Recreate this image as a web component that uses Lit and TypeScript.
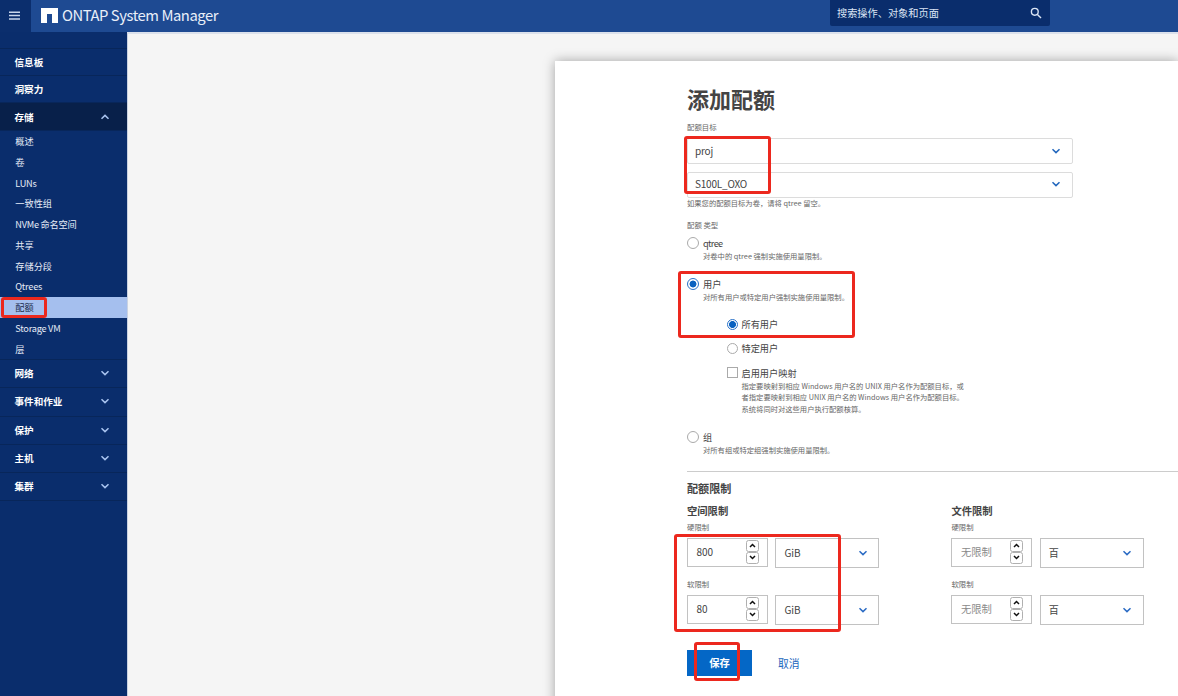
import { LitElement, html, css, svg } from "lit";
import { customElement, property } from "lit/decorators.js";

const FONT = css`"Noto Sans CJK SC", "Noto Sans", sans-serif`;

@customElement("chevron-icon")
class ChevronIcon extends LitElement {
  @property({ type: Boolean }) up = false;
  static styles = css`
    :host { display: block; width: 10px; height: 8px; }
    svg { display: block; }
  `;
  render() {
    const d = this.up ? "M1.5 5.8 L5 2.4 L8.5 5.8" : "M1.5 2.2 L5 5.6 L8.5 2.2";
    return html`<svg width="10" height="8" viewBox="0 0 10 8" fill="none" stroke="currentColor" stroke-width="1.5">${svg`<path d=${d} />`}</svg>`;
  }
}

@customElement("nav-panel")
class NavPanel extends LitElement {
  static styles = css`
    :host { display: block; box-sizing: border-box; width: 127px; height: 664px; background: #0a2d6c; color: #fff; font-family: ${FONT}; }
    .blank { height: 16px; border-bottom: 1px solid #08265a; }
    .row { box-sizing: border-box; display: flex; align-items: center; justify-content: space-between; padding: 0 17px 0 14.5px; height: 27px; border-bottom: 1px solid #08265a; font-size: 9.6px; font-weight: 700; line-height: 14px; }
    .row chevron-icon { color: #a9c4f0; }
    .open { height: 28px; background: #08204a; }
    .tall { height: 28.25px; padding-bottom: 1px; }
    .subs { height: 229px; border-bottom: 1px solid #08265a; box-sizing: border-box; }
    .sub { height: 20.77px; line-height: 20.3px; padding-left: 15.3px; font-size: 9.2px; color: #e6ecf7; white-space: pre; }
    .latin { letter-spacing: -0.25px; }
    .active { background: #a5bfee; color: #1c2c4c; }
  `;
  render() {
    const subs = ["概述", "卷", "LUNs", "一致性组", "NVMe 命名空间", "共享", "存储分段", "Qtrees", "配额", "Storage VM", "层"];
    return html`
      <div class="blank"></div>
      <div class="row">信息板</div>
      <div class="row">洞察力</div>
      <div class="row open">存储<chevron-icon up></chevron-icon></div>
      <div class="subs">${subs.map((s) => html`<div class="sub ${s === "配额" ? "active" : ""} ${/^[A-Z]/.test(s) ? "latin" : ""}">${s}</div>`)}</div>
      ${["网络", "事件和作业", "保护", "主机", "集群"].map((s) => html`<div class="row tall">${s}<chevron-icon></chevron-icon></div>`)}
    `;
  }
}

@customElement("limit-row")
class LimitRow extends LitElement {
  @property() label = "";
  @property() value = "";
  @property() unit = "";
  @property({ type: Boolean }) empty = false;
  static styles = css`
    :host { display: block; height: 57px; font-family: ${FONT}; color: #444; }
    .label { height: 17px; line-height: 12px; font-size: 7.4px; color: #666; }
    .fields { display: flex; gap: 8px; align-items: flex-start; }
    .num { box-sizing: border-box; width: 81px; height: 29px; border: 1px solid #c2c2c2; display: flex; justify-content: space-between; padding: 1px 8px 0 8.5px; font-size: 10px; line-height: 24px; }
    .empty { color: #8a8a8a; font-size: 10.3px; }
    .spin { display: flex; flex-direction: column; }
    .spin span { box-sizing: border-box; width: 13px; height: 12px; border: 1px solid #b0b0b0; border-radius: 2.5px; display: flex; align-items: center; justify-content: center; color: #111; }
    .sel { box-sizing: border-box; width: 104px; height: 30px; border: 1px solid #c2c2c2; display: flex; align-items: center; justify-content: space-between; padding: 0 10.5px 0 8px; margin-left: -0.6px; font-size: 10px; line-height: 20px; }
    .sel chevron-icon { color: #2b6bc4; }
  `;
  render() {
    return html`
      <div class="label">${this.label}</div>
      <div class="fields">
        <div class="num ${this.empty ? "empty" : ""}"><span>${this.value}</span>
          <div class="spin">
            <span><svg width="7" height="5" fill="none" stroke="currentColor" stroke-width="1.5"><path d="M1 4 L3.5 1.5 L6 4" /></svg></span>
            <span><svg width="7" height="5" fill="none" stroke="currentColor" stroke-width="1.5"><path d="M1 1 L3.5 3.5 L6 1" /></svg></span>
          </div>
        </div>
        <div class="sel"><span>${this.unit}</span><chevron-icon></chevron-icon></div>
      </div>
    `;
  }
}

@customElement("app-root")
class AppRoot extends LitElement {
  static styles = css`
    :host { display: block; position: relative; width: 1178px; height: 696px; overflow: hidden; background: #f5f5f5; font-family: ${FONT}; color: #444; }
    .header { height: 32px; display: flex; background: #1e4a92; color: #fff; }
    .burger { width: 31px; height: 32px; background: #0b2e6d; }
    .burger svg, .logo, .search svg { display: block; }
    .logo { margin: 8px 4px 0 10px; }
    .brand { width: 765px; font-size: 14.8px; letter-spacing: -0.45px; line-height: 30px; color: #e9eff9; white-space: pre; }
    .search { box-sizing: border-box; width: 220px; height: 26px; background: #0a2d6c; border-radius: 0 0 2px 2px; margin-left: 3px; padding: 0 8px 0 7px; display: flex; align-items: center; justify-content: space-between; font-size: 10.2px; line-height: 26px; color: #dbe5f5; }
    .body { display: flex; height: 664px; }
    .main { flex: 1; min-width: 0; height: 664px; box-sizing: border-box; padding: 27px 0 0 427px; border-top: 2px solid #dbe1ec; border-left: 1px solid #c9d2e2; overflow: hidden; }
    .panel { box-sizing: border-box; height: 660px; background: #fff; box-shadow: 0 0 11px rgba(0, 0, 0, 0.34); padding: 22px 0 0 132px; }
    h1 { margin: 0; font-size: 22px; line-height: 30px; height: 30px; font-weight: 700; }
    .label { font-size: 7.4px; line-height: 12px; height: 12px; color: #666; white-space: pre; }
    .target { margin: 8px 0 5px; }
    .kind { margin-top: 10px; }
    .select { box-sizing: border-box; width: 386px; height: 26px; border: 1px solid #dcdcdc; border-radius: 2px; display: flex; align-items: center; justify-content: space-between; padding: 0 11px 1px 7px; font-size: 10px; letter-spacing: -0.2px; line-height: 20px; }
    .select + .select { margin-top: 7.6px; }
    .select chevron-icon { color: #2166bd; }
    .opt { display: flex; gap: 4px; }
    .dot { box-sizing: border-box; width: 12px; height: 12px; border: 1px solid #aaa; border-radius: 50%; background: #fff; flex: none; margin-top: 1px; }
    .small { width: 11px; height: 11px; margin-top: 1px; }
    .on { border-color: #2a72c8; background: radial-gradient(circle, #0b62c0 3.1px, #fff 3.8px); }
    .box { border-radius: 0; }
    .name { font-size: 9.2px; line-height: 14px; height: 14.5px; }
    .n1 .name { line-height: 13px; }
    .tight { letter-spacing: -0.65px; }
    .desc { font-size: 7.3px; line-height: 11.5px; color: #666; white-space: pre; }
    .o1 { height: 41px; margin-top: 5px; }
    .o2 { height: 41px; }
    .nested { padding-left: 39.5px; height: 112px; }
    .n1 { height: 24px; }
    .o3 { height: 41px; }
    .rule { border-top: 1px solid #ccc; height: 8px; }
    h2 { margin: 0; font-size: 11.1px; line-height: 16px; height: 16px; font-weight: 700; }
    h3 { margin: 0; font-size: 10.3px; line-height: 16px; height: 16px; padding: 7px 0 1.5px; font-weight: 700; }
    .cols { display: flex; gap: 72px; height: 154.4px; }
    .actions { display: flex; align-items: center; height: 26px; font-size: 10.3px; }
    .save { box-sizing: border-box; width: 65px; height: 26px; background: #0467c6; color: #fff; font-weight: 700; line-height: 25px; text-align: center; }
    .cancel { margin-left: 26px; font-size: 10.8px; line-height: 25px; color: #2166bd; }
    .mark { position: absolute; box-sizing: border-box; border: 3px solid #ec281e; border-radius: 3px; }
    .m1 { left: 1px; top: 297px; width: 46px; height: 21px; }
    .m2 { left: 684px; top: 136px; width: 87px; height: 58px; }
    .m3 { left: 678px; top: 271px; width: 177px; height: 67px; }
    .m4 { left: 674px; top: 534px; width: 167px; height: 98px; }
    .m5 { left: 694px; top: 642px; width: 46px; height: 39px; }
  `;
  render() {
    return html`
      <div class="header">
        <div class="burger"><svg width="31" height="32" stroke="#c9d6ec" stroke-width="1.5"><path d="M9 12.2H20M9 15.6H20M9 19H20" /></svg></div>
        <svg class="logo" width="17" height="15"><path fill="#fff" d="M0 0H17V15H11V6H6V15H0Z" /></svg>
        <div class="brand">ONTAP System Manager</div>
        <div class="search"><span>搜索操作、对象和页面</span><svg width="12" height="12" fill="none" stroke="#dbe5f5" stroke-width="1.4"><circle cx="4.8" cy="4.8" r="3.4" /><path d="M7.4 7.4 L11 11" /></svg></div>
      </div>
      <div class="body">
        <nav-panel></nav-panel>
        <div class="main">
          <div class="panel">
            <h1>添加配额</h1>
            <div class="label target">配额目标</div>
            <div class="select"><span>proj</span><chevron-icon></chevron-icon></div>
            <div class="select"><span>S100L_OXO</span><chevron-icon></chevron-icon></div>
            <div class="desc">如果您的配额目标为卷，请将 qtree 留空。</div>
            <div class="label kind">配额 类型</div>
            <div class="opt o1"><span class="dot"></span><div><div class="name tight">qtree</div><div class="desc">对卷中的 qtree 强制实施使用量限制。</div></div></div>
            <div class="opt o2"><span class="dot on"></span><div><div class="name">用户</div><div class="desc">对所有用户或特定用户强制实施使用量限制。</div></div></div>
            <div class="nested">
              <div class="opt n1"><span class="dot small on"></span><div class="name">所有用户</div></div>
              <div class="opt n1"><span class="dot small"></span><div class="name">特定用户</div></div>
              <div class="opt"><span class="dot small box"></span><div><div class="name">启用用户映射</div><div class="desc">指定要映射到相应 Windows 用户名的 UNIX 用户名作为配额目标，或
者指定要映射到相应 UNIX 用户名的 Windows 用户名作为配额目标。
系统将同时对这些用户执行配额核算。</div></div></div>
            </div>
            <div class="opt o3"><span class="dot"></span><div><div class="name">组</div><div class="desc">对所有组或特定组强制实施使用量限制。</div></div></div>
            <div class="rule"></div>
            <h2>配额限制</h2>
            <div class="cols">
              <div>
                <h3>空间限制</h3>
                <limit-row label="硬限制" value="800" unit="GiB"></limit-row>
                <limit-row label="软限制" value="80" unit="GiB"></limit-row>
              </div>
              <div>
                <h3>文件限制</h3>
                <limit-row label="硬限制" value="无限制" unit="百" empty></limit-row>
                <limit-row label="软限制" value="无限制" unit="百" empty></limit-row>
              </div>
            </div>
            <div class="actions"><div class="save">保存</div><div class="cancel">取消</div></div>
          </div>
        </div>
      </div>
      <div class="mark m1"></div><div class="mark m2"></div><div class="mark m3"></div><div class="mark m4"></div><div class="mark m5"></div>
    `;
  }
}
